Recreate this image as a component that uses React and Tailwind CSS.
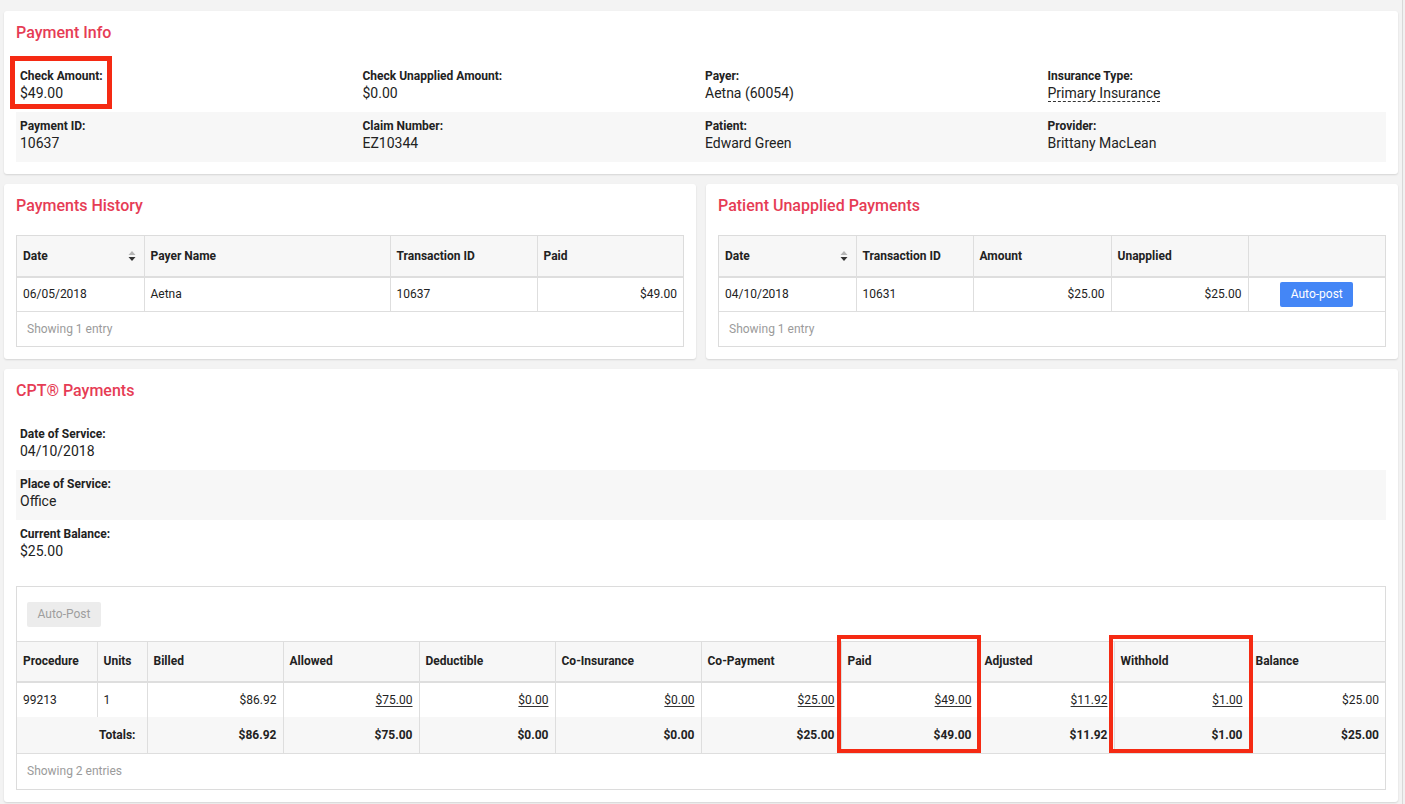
import React from "react";

const FONT = { fontFamily: "Roboto, 'Liberation Sans', Arial, sans-serif" };

function Card({ title, children, className = "" }) {
  return (
    <div className={"bg-white rounded-[3px] shadow-[0_1px_2px_rgba(0,0,0,0.13)] px-3 pt-[10px] pb-3 " + className}>
      <h2 className="text-[16px] leading-6 font-medium text-[#e63c55] mb-[17px]">{title}</h2>
      {children}
    </div>
  );
}

function Field({ label, value, dashed, children }) {
  return (
    <div className="relative h-[50px] px-1 pt-[7px]">
      <div className="text-[12px] leading-[14px] font-bold text-[#222]">{label}</div>
      <div className="text-[14px] leading-5 text-[#222]">
        {dashed ? (
          <span className="border-b border-dashed border-[#333]">{value}</span>
        ) : (
          value
        )}
      </div>
      {children}
    </div>
  );
}

function SortIcon() {
  return (
    <svg width="8" height="12" viewBox="0 0 8 12" className="shrink-0">
      <polygon points="0.5,5 4,1 7.5,5" fill="#b5b5b5" />
      <polygon points="0.5,7 4,11 7.5,7" fill="#333" />
    </svg>
  );
}

const th =
  "h-[41px] bg-[#f7f7f7] text-[12px] font-bold text-[#222] text-left align-middle px-[6px] border-r border-b-2 border-[#dedede] last:border-r-0";
const td = "h-[34px] text-[12px] text-[#222] px-[6px] border-r border-b border-[#dedede] last:border-r-0";

function Footer({ text }) {
  return (
    <div className="h-[34px] px-[10px] flex items-center text-[12px] text-[#9b9b9b]">{text}</div>
  );
}

function PaymentsHistory() {
  return (
    <Card title="Payments History">
      <div className="border border-[#dcdcdc]">
        <table className="w-full table-fixed border-collapse">
          <colgroup>
            <col className="w-[127px]" />
            <col className="w-[246px]" />
            <col className="w-[147px]" />
            <col />
          </colgroup>
          <thead>
            <tr>
              <th className={th}>
                <div className="flex items-center justify-between pr-[2px]">
                  <span>Date</span>
                  <SortIcon />
                </div>
              </th>
              <th className={th}>Payer Name</th>
              <th className={th}>Transaction ID</th>
              <th className={th}>Paid</th>
            </tr>
          </thead>
          <tbody>
            <tr>
              <td className={td}>06/05/2018</td>
              <td className={td}>Aetna</td>
              <td className={td}>10637</td>
              <td className={td + " text-right"}>$49.00</td>
            </tr>
          </tbody>
        </table>
        <Footer text="Showing 1 entry" />
      </div>
    </Card>
  );
}

function UnappliedPayments() {
  return (
    <Card title="Patient Unapplied Payments">
      <div className="border border-[#dcdcdc]">
        <table className="w-full table-fixed border-collapse">
          <colgroup>
            <col className="w-[137px]" />
            <col className="w-[117px]" />
            <col className="w-[138px]" />
            <col className="w-[137px]" />
            <col />
          </colgroup>
          <thead>
            <tr>
              <th className={th}>
                <div className="flex items-center justify-between pr-[2px]">
                  <span>Date</span>
                  <SortIcon />
                </div>
              </th>
              <th className={th}>Transaction ID</th>
              <th className={th}>Amount</th>
              <th className={th}>Unapplied</th>
              <th className={th}></th>
            </tr>
          </thead>
          <tbody>
            <tr>
              <td className={td}>04/10/2018</td>
              <td className={td}>10631</td>
              <td className={td + " text-right"}>$25.00</td>
              <td className={td + " text-right"}>$25.00</td>
              <td className={td + " text-center"}>
                <button className="h-[25px] w-[73px] rounded-[2px] bg-[#4486f6] text-white text-[12px] leading-[25px]">
                  Auto-post
                </button>
              </td>
            </tr>
          </tbody>
        </table>
        <Footer text="Showing 1 entry" />
      </div>
    </Card>
  );
}

const L = ({ children }) => (
  <span className="underline underline-offset-[2px] decoration-[#333]">{children}</span>
);

function CptPayments() {
  const headers = [
    "Procedure",
    "Units",
    "Billed",
    "Allowed",
    "Deductible",
    "Co-Insurance",
    "Co-Payment",
    "Paid",
    "Adjusted",
    "Withhold",
    "Balance",
  ];
  const bodyTd = "h-[35px] text-[12px] text-[#222] px-[6px] border-r border-[#dedede] last:border-r-0";
  const totTd =
    "h-[36px] text-[12px] font-bold text-[#222] px-[6px] text-right bg-[#f7f7f7] border-r border-b border-[#dedede] last:border-r-0";
  return (
    <Card title="CPT® Payments">
      <div className="bg-white">
        <Field label="Date of Service:" value="04/10/2018" />
      </div>
      <div className="bg-[#f7f7f7]">
        <Field label="Place of Service:" value="Office" />
      </div>
      <div className="bg-white">
        <Field label="Current Balance:" value="$25.00" />
      </div>
      <div className="relative mt-4 border border-[#dcdcdc]">
        <div className="px-[10px] py-[14px]">
          <button className="h-[25px] w-[74px] rounded-[2px] bg-[#ececec] text-[#9e9e9e] text-[12px] leading-[25px]">
            Auto-Post
          </button>
        </div>
        <table className="w-full table-fixed border-collapse border-t border-[#dedede]">
          <colgroup>
            <col className="w-[80px]" />
            <col className="w-[50px]" />
            <col className="w-[136px]" />
            <col className="w-[136px]" />
            <col className="w-[136px]" />
            <col className="w-[146px]" />
            <col className="w-[140px]" />
            <col className="w-[137px]" />
            <col className="w-[136px]" />
            <col className="w-[135px]" />
            <col />
          </colgroup>
          <thead>
            <tr>
              {headers.map((h) => (
                <th key={h} className={th + " h-[40px]"}>
                  {h}
                </th>
              ))}
            </tr>
          </thead>
          <tbody>
            <tr>
              <td className={bodyTd}>99213</td>
              <td className={bodyTd}>1</td>
              <td className={bodyTd + " text-right"}>$86.92</td>
              <td className={bodyTd + " text-right"}><L>$75.00</L></td>
              <td className={bodyTd + " text-right"}><L>$0.00</L></td>
              <td className={bodyTd + " text-right"}><L>$0.00</L></td>
              <td className={bodyTd + " text-right"}><L>$25.00</L></td>
              <td className={bodyTd + " text-right"}><L>$49.00</L></td>
              <td className={bodyTd + " text-right"}><L>$11.92</L></td>
              <td className={bodyTd + " text-right"}><L>$1.00</L></td>
              <td className={bodyTd + " text-right"}>$25.00</td>
            </tr>
            <tr>
              <td colSpan={2} className={totTd + " pr-[11px]"}>Totals:</td>
              <td className={totTd}>$86.92</td>
              <td className={totTd}>$75.00</td>
              <td className={totTd}>$0.00</td>
              <td className={totTd}>$0.00</td>
              <td className={totTd}>$25.00</td>
              <td className={totTd}>$49.00</td>
              <td className={totTd}>$11.92</td>
              <td className={totTd}>$1.00</td>
              <td className={totTd}>$25.00</td>
            </tr>
          </tbody>
        </table>
        <div className="h-[35px] px-[10px] flex items-center text-[12px] text-[#9b9b9b]">Showing 2 entries</div>
        <div className="absolute left-[820px] top-[48px] w-[144px] h-[118px] border-[4px] border-[#f52a13]" />
        <div className="absolute left-[1092px] top-[48px] w-[144px] h-[118px] border-[4px] border-[#f52a13]" />
      </div>
    </Card>
  );
}

export default function App() {
  return (
    <div style={FONT} className="flex min-h-screen bg-[#f3f3f3]">
      <div className="flex-1 pl-1 pr-1 pt-[11px] pb-1 flex flex-col gap-[10px]">
        <Card title="Payment Info">
          <div className="grid grid-cols-4">
            <Field label="Check Amount:" value="$49.00">
              <div className="absolute -left-[6px] -top-[6px] w-[102px] h-[53px] border-[5px] border-[#f52a13]" />
            </Field>
            <Field label="Check Unapplied Amount:" value="$0.00" />
            <Field label="Payer:" value="Aetna (60054)" />
            <Field label="Insurance Type:" value="Primary Insurance" dashed />
          </div>
          <div className="grid grid-cols-4 bg-[#f7f7f7]">
            <Field label="Payment ID:" value="10637" />
            <Field label="Claim Number:" value="EZ10344" />
            <Field label="Patient:" value="Edward Green" />
            <Field label="Provider:" value="Brittany MacLean" />
          </div>
        </Card>
        <div className="grid grid-cols-2 gap-[10px]">
          <PaymentsHistory />
          <UnappliedPayments />
        </div>
        <CptPayments />
      </div>
      <div className="w-[3px] border-l border-[#d8d8d8] bg-[#f1f1f1]" />
    </div>
  );
}
